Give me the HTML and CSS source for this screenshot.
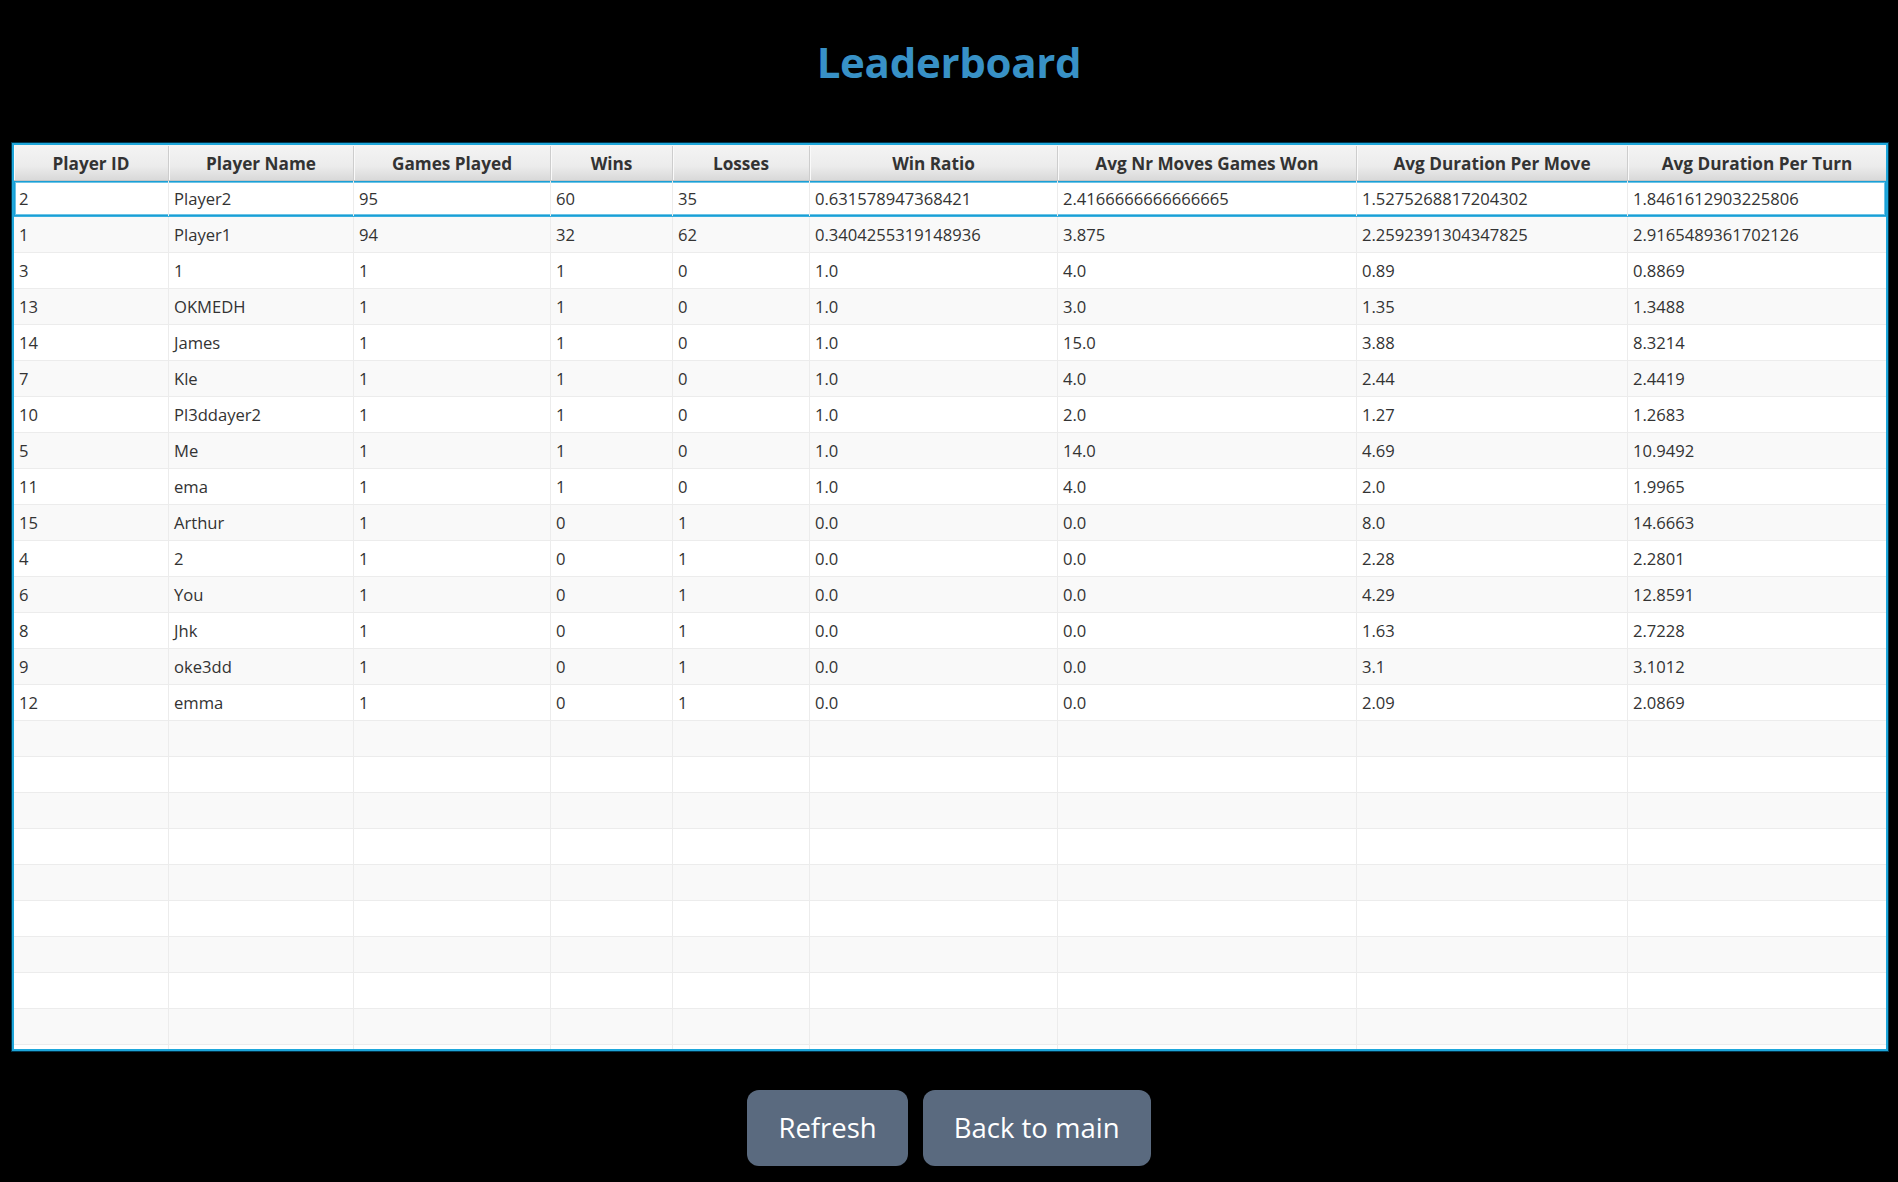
FILE: index.html
```html
<!DOCTYPE html>
<html lang="en">
<head>
<meta charset="utf-8">
<title>Leaderboard</title>
<link rel="stylesheet" href="styles.css">
</head>
<body>
<div class="page">
  <header class="title-bar"><h1 class="title">Leaderboard</h1></header>
  <section class="table">
    <div class="row head">
      <div class="hc">Player ID</div><div class="hc">Player Name</div><div class="hc">Games Played</div><div class="hc">Wins</div><div class="hc">Losses</div><div class="hc">Win Ratio</div><div class="hc">Avg Nr Moves Games Won</div><div class="hc">Avg Duration Per Move</div><div class="hc">Avg Duration Per Turn</div>
    </div>
    <div class="body">
      <div class="row focused"><div class="c">2</div><div class="c">Player2</div><div class="c">95</div><div class="c">60</div><div class="c">35</div><div class="c">0.631578947368421</div><div class="c">2.4166666666666665</div><div class="c">1.5275268817204302</div><div class="c">1.8461612903225806</div></div>
      <div class="row"><div class="c">1</div><div class="c">Player1</div><div class="c">94</div><div class="c">32</div><div class="c">62</div><div class="c">0.3404255319148936</div><div class="c">3.875</div><div class="c">2.2592391304347825</div><div class="c">2.9165489361702126</div></div>
      <div class="row"><div class="c">3</div><div class="c">1</div><div class="c">1</div><div class="c">1</div><div class="c">0</div><div class="c">1.0</div><div class="c">4.0</div><div class="c">0.89</div><div class="c">0.8869</div></div>
      <div class="row"><div class="c">13</div><div class="c">OKMEDH</div><div class="c">1</div><div class="c">1</div><div class="c">0</div><div class="c">1.0</div><div class="c">3.0</div><div class="c">1.35</div><div class="c">1.3488</div></div>
      <div class="row"><div class="c">14</div><div class="c">James</div><div class="c">1</div><div class="c">1</div><div class="c">0</div><div class="c">1.0</div><div class="c">15.0</div><div class="c">3.88</div><div class="c">8.3214</div></div>
      <div class="row"><div class="c">7</div><div class="c">Kle</div><div class="c">1</div><div class="c">1</div><div class="c">0</div><div class="c">1.0</div><div class="c">4.0</div><div class="c">2.44</div><div class="c">2.4419</div></div>
      <div class="row"><div class="c">10</div><div class="c">Pl3ddayer2</div><div class="c">1</div><div class="c">1</div><div class="c">0</div><div class="c">1.0</div><div class="c">2.0</div><div class="c">1.27</div><div class="c">1.2683</div></div>
      <div class="row"><div class="c">5</div><div class="c">Me</div><div class="c">1</div><div class="c">1</div><div class="c">0</div><div class="c">1.0</div><div class="c">14.0</div><div class="c">4.69</div><div class="c">10.9492</div></div>
      <div class="row"><div class="c">11</div><div class="c">ema</div><div class="c">1</div><div class="c">1</div><div class="c">0</div><div class="c">1.0</div><div class="c">4.0</div><div class="c">2.0</div><div class="c">1.9965</div></div>
      <div class="row"><div class="c">15</div><div class="c">Arthur</div><div class="c">1</div><div class="c">0</div><div class="c">1</div><div class="c">0.0</div><div class="c">0.0</div><div class="c">8.0</div><div class="c">14.6663</div></div>
      <div class="row"><div class="c">4</div><div class="c">2</div><div class="c">1</div><div class="c">0</div><div class="c">1</div><div class="c">0.0</div><div class="c">0.0</div><div class="c">2.28</div><div class="c">2.2801</div></div>
      <div class="row"><div class="c">6</div><div class="c">You</div><div class="c">1</div><div class="c">0</div><div class="c">1</div><div class="c">0.0</div><div class="c">0.0</div><div class="c">4.29</div><div class="c">12.8591</div></div>
      <div class="row"><div class="c">8</div><div class="c">Jhk</div><div class="c">1</div><div class="c">0</div><div class="c">1</div><div class="c">0.0</div><div class="c">0.0</div><div class="c">1.63</div><div class="c">2.7228</div></div>
      <div class="row"><div class="c">9</div><div class="c">oke3dd</div><div class="c">1</div><div class="c">0</div><div class="c">1</div><div class="c">0.0</div><div class="c">0.0</div><div class="c">3.1</div><div class="c">3.1012</div></div>
      <div class="row"><div class="c">12</div><div class="c">emma</div><div class="c">1</div><div class="c">0</div><div class="c">1</div><div class="c">0.0</div><div class="c">0.0</div><div class="c">2.09</div><div class="c">2.0869</div></div>
      <div class="row"><div class="c"></div><div class="c"></div><div class="c"></div><div class="c"></div><div class="c"></div><div class="c"></div><div class="c"></div><div class="c"></div><div class="c"></div></div>
      <div class="row"><div class="c"></div><div class="c"></div><div class="c"></div><div class="c"></div><div class="c"></div><div class="c"></div><div class="c"></div><div class="c"></div><div class="c"></div></div>
      <div class="row"><div class="c"></div><div class="c"></div><div class="c"></div><div class="c"></div><div class="c"></div><div class="c"></div><div class="c"></div><div class="c"></div><div class="c"></div></div>
      <div class="row"><div class="c"></div><div class="c"></div><div class="c"></div><div class="c"></div><div class="c"></div><div class="c"></div><div class="c"></div><div class="c"></div><div class="c"></div></div>
      <div class="row"><div class="c"></div><div class="c"></div><div class="c"></div><div class="c"></div><div class="c"></div><div class="c"></div><div class="c"></div><div class="c"></div><div class="c"></div></div>
      <div class="row"><div class="c"></div><div class="c"></div><div class="c"></div><div class="c"></div><div class="c"></div><div class="c"></div><div class="c"></div><div class="c"></div><div class="c"></div></div>
      <div class="row"><div class="c"></div><div class="c"></div><div class="c"></div><div class="c"></div><div class="c"></div><div class="c"></div><div class="c"></div><div class="c"></div><div class="c"></div></div>
      <div class="row"><div class="c"></div><div class="c"></div><div class="c"></div><div class="c"></div><div class="c"></div><div class="c"></div><div class="c"></div><div class="c"></div><div class="c"></div></div>
      <div class="row"><div class="c"></div><div class="c"></div><div class="c"></div><div class="c"></div><div class="c"></div><div class="c"></div><div class="c"></div><div class="c"></div><div class="c"></div></div>
      <div class="row"><div class="c"></div><div class="c"></div><div class="c"></div><div class="c"></div><div class="c"></div><div class="c"></div><div class="c"></div><div class="c"></div><div class="c"></div></div>
    </div>
  </section>
  <footer class="actions">
    <button class="btn">Refresh</button>
    <button class="btn">Back to main</button>
  </footer>
</div>
</body>
</html>
```
FILE: styles.css
```css
html, body {
  margin: 0;
  padding: 0;
  background: #000;
}
body {
  font-family: "Open Sans", "Noto Sans", sans-serif;
  width: 1898px;
  height: 1182px;
  overflow: hidden;
}
.page {
  display: flex;
  flex-direction: column;
}
.title-bar {
  padding-top: 41px;
  height: 143px;
  box-sizing: border-box;
  display: flex;
  justify-content: center;
  flex: none;
}
.title {
  margin: 0;
  font-size: 42px;
  line-height: 42px;
  font-weight: 700;
  color: #3891c6;
  letter-spacing: -0.3px;
}
.table {
  margin: 0 10px 0 12px;
  height: 908px;
  box-sizing: border-box;
  border: 2px solid #1ea6da;
  box-shadow: 0 0 0 1px rgba(3, 120, 170, 0.45);
  background: #fff;
  overflow: hidden;
  display: flex;
  flex-direction: column;
  flex: none;
}
.row {
  display: grid;
  grid-template-columns: 155px 185px 197px 122px 137px 248px 299px 271px 1fr;
  height: 36px;
  box-sizing: border-box;
  border-bottom: 1px solid #ececec;
  background: #fff;
}
.body .row:nth-child(even) {
  background: #f9f9f9;
}
.row.focused {
  box-shadow: inset 0 0 0 1px #1a9fd6, inset 0 0 0 2px #6cc4e6;
  border-bottom-color: #3bb0de;
}
.head {
  background: linear-gradient(to bottom, #f4f4f4 0%, #ececec 60%, #d9d9d9 100%);
  border-bottom: 1px solid #c4c4c4;
  flex: none;
  padding-top: 1px;
}
.hc {
  display: flex;
  align-items: center;
  justify-content: center;
  font-size: 17.2px;
  font-weight: 700;
  color: #333;
  border-right: 1px solid #cdcdcd;
  box-shadow: inset 1px 0 0 #fafafa;
  white-space: nowrap;
  overflow: hidden;
}
.hc:last-child {
  border-right: none;
}
.c {
  display: flex;
  align-items: center;
  padding-left: 5px;
  font-size: 16.6px;
  color: #333;
  border-right: 1px solid #ececec;
  white-space: nowrap;
  overflow: hidden;
}
.c:last-child {
  border-right: none;
}
.body {
  flex: none;
}
.actions {
  display: flex;
  justify-content: center;
  gap: 15px;
  padding-top: 39px;
}
.btn {
  height: 76px;
  padding: 0 31px;
  border: none;
  border-radius: 12px;
  background: #5a6a7f;
  color: #fff;
  font-family: "Open Sans", "Noto Sans", sans-serif;
  font-size: 27.5px;
  line-height: 1;
}
```
